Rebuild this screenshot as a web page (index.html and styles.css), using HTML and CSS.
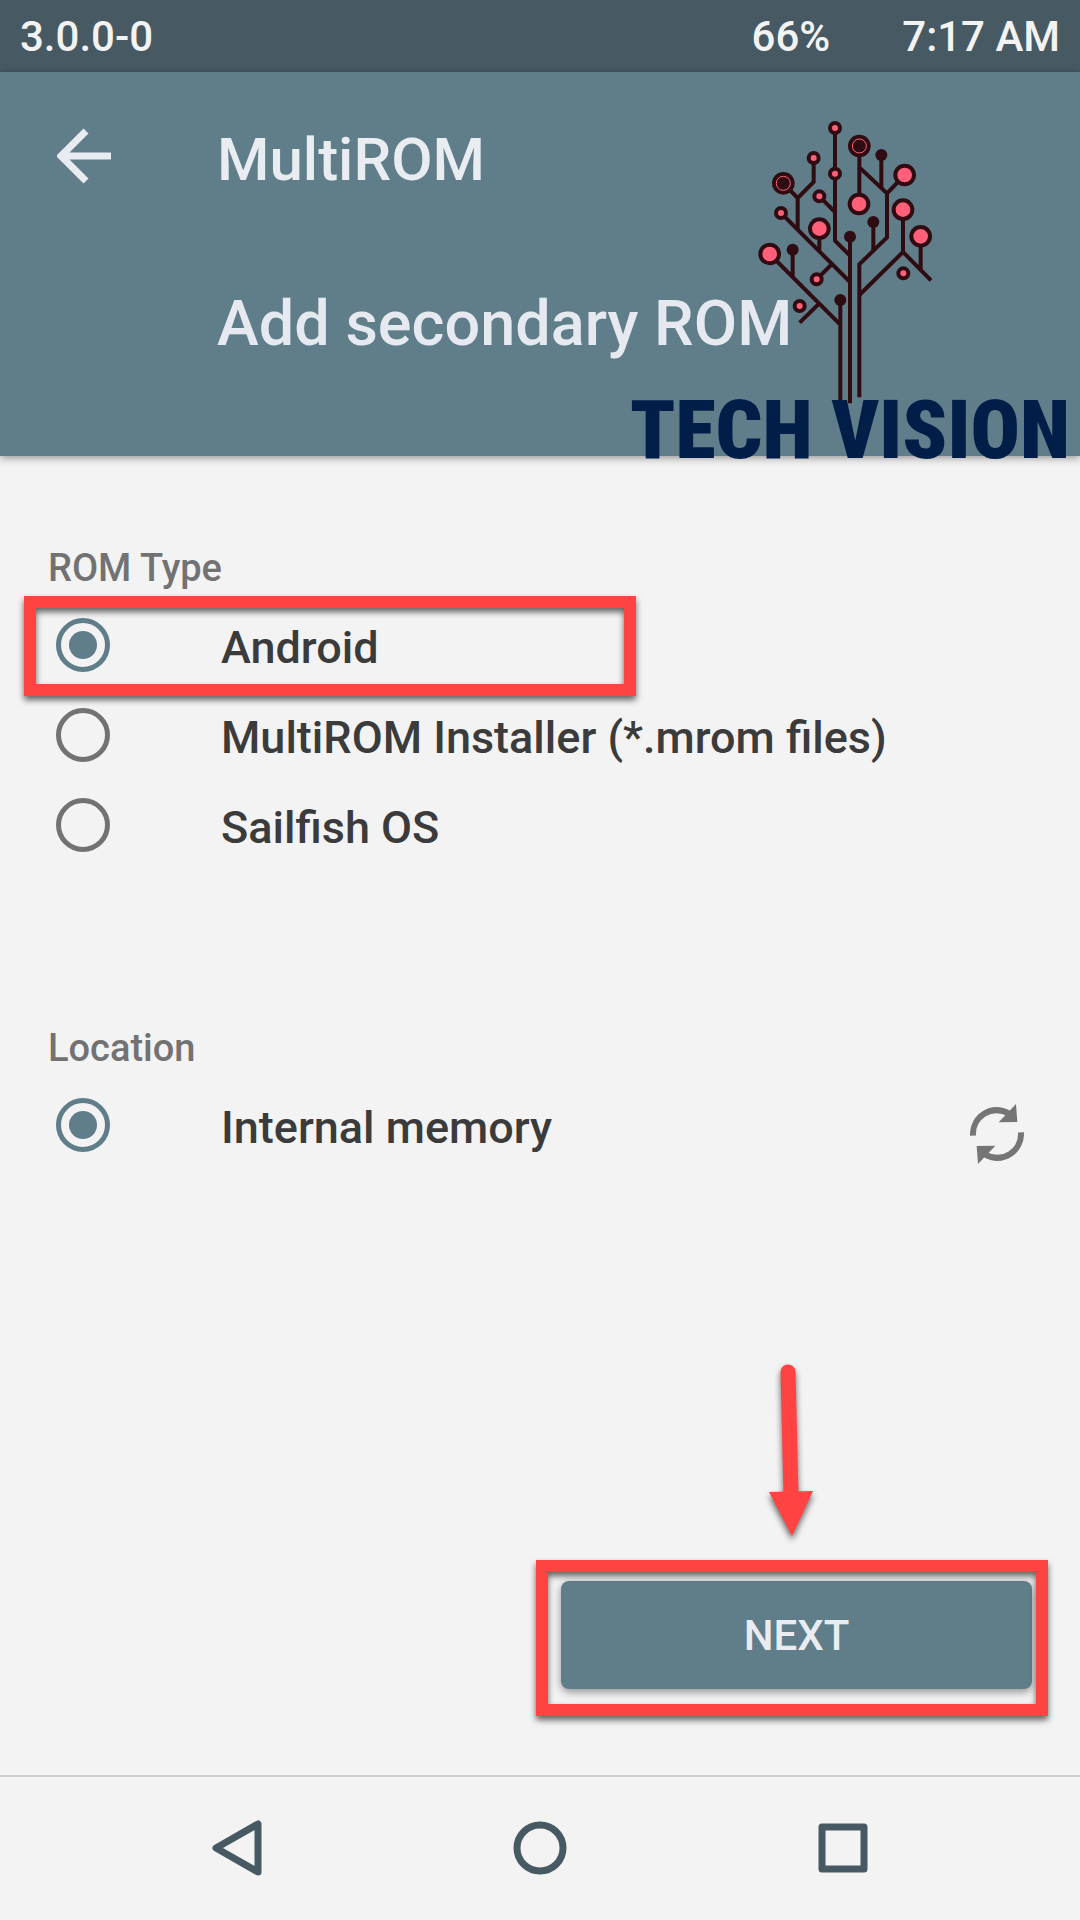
FILE: index.html
```html
<!DOCTYPE html>
<html lang="en">
<head>
  <meta charset="UTF-8">
  <meta name="viewport" content="width=device-width, initial-scale=1">
  <title>MultiROM - Add secondary ROM</title>
  <link rel="stylesheet" href="styles.css">
</head>
<body>
  <div class="status-bar">
    <span>3.0.0-0</span>
    <span class="battery">66%</span>
    <span>7:17 AM</span>
  </div>

  <header class="header">
    <button class="back" type="button" aria-label="Back">
      <svg width="54" height="56" viewBox="0 0 54 56">
        <path d="M54 28H5M29 3L4 28L29 53" fill="none" stroke="#e9edf1" stroke-width="7"/>
      </svg>
    </button>
    <div class="titles">
      <h1>MultiROM</h1>
      <h2>Add secondary ROM</h2>
    </div>

    <div class="logo">
      <svg class="tree" width="210" height="300" viewBox="0 0 630 900">
        <g fill="none" stroke="#2f0c11" stroke-width="12">
          <path d="M285 54V392L330 437M238 259L285 306"/>
          <path d="M221 144V216L173 264V357M130 220L173 264"/>
          <path d="M123 309L330 516M238 356V424M230 508L276 462"/>
          <path d="M330 380V880M301 570V880"/>
          <path d="M89 432L301 644M158 419V500M179 638L238 580"/>
          <path d="M358 108V282M358 172L441 250V382L358 463V862"/>
          <path d="M494 195L441 250M424 135V232M400 336V422"/>
          <path d="M489 299V426L358 555M489 426L573 511M542 379V480"/>
        </g>
        <g fill="#ff5f78" stroke="#2f0c11" stroke-width="12">
          <circle cx="285" cy="54" r="15"/>
          <circle cx="221" cy="144" r="15"/>
          <circle cx="285" cy="191" r="15"/>
          <circle cx="238" cy="259" r="15"/>
          <circle cx="123" cy="309" r="15"/>
          <circle cx="230" cy="508" r="15"/>
          <circle cx="179" cy="588" r="15"/>
          <circle cx="490" cy="490" r="15"/>
          <circle cx="494" cy="195" r="28"/>
          <circle cx="357" cy="282" r="28"/>
          <circle cx="489" cy="299" r="28"/>
          <circle cx="542" cy="379" r="28"/>
          <circle cx="238" cy="356" r="28"/>
          <circle cx="89" cy="432" r="28"/>
        </g>
        <g fill="#2f0c11">
          <circle cx="424" cy="135" r="18"/>
          <circle cx="400" cy="336" r="18"/>
          <circle cx="330" cy="380" r="18"/>
          <circle cx="158" cy="419" r="18"/>
          <circle cx="301" cy="570" r="18"/>
          <circle cx="358" cy="108" r="34"/>
          <circle cx="130" cy="220" r="34"/>
        </g>
        <g fill="none" stroke="#ff5f78" stroke-width="3">
          <circle cx="358" cy="108" r="21"/>
          <circle cx="130" cy="220" r="21"/>
        </g>
      </svg>
      <span class="brand">TECH VISION</span>
    </div>
  </header>

  <main class="content">
    <fieldset class="group">
      <legend>ROM Type</legend>
      <div class="row">
        <input type="radio" name="type" id="android" checked>
        <label for="android">Android</label>
        <div class="mark mark-row"></div>
      </div>
      <div class="row">
        <input type="radio" name="type" id="installer">
        <label for="installer">MultiROM Installer (*.mrom files)</label>
      </div>
      <div class="row">
        <input type="radio" name="type" id="sailfish">
        <label for="sailfish">Sailfish OS</label>
      </div>
    </fieldset>

    <fieldset class="group">
      <legend>Location</legend>
      <div class="row">
        <input type="radio" name="location" id="internal" checked>
        <label for="internal">Internal memory</label>
        <button class="refresh" type="button" aria-label="Refresh">
          <svg width="54" height="60" viewBox="0 0 162 180">
            <g fill="none" stroke="#757575" stroke-width="18">
              <path d="M9 95C6 40 62 -1 118 29"/>
              <path d="M153 85C156 140 100 181 44 151"/>
            </g>
            <path d="M138 0L142 54L86 55ZM24 180L20 126L76 125Z" fill="#757575"/>
          </svg>
        </button>
      </div>
    </fieldset>

    <div class="actions">
      <div class="next-wrap">
        <button class="next" type="button">NEXT</button>
        <div class="mark mark-next"></div>
        <svg class="arrow" width="44" height="172" viewBox="0 0 44 172">
          <path d="M19 8L22 130" stroke="#ff4343" stroke-width="15" stroke-linecap="round"/>
          <path d="M0 128L44 127L23 172Z" fill="#ff4343"/>
        </svg>
      </div>
    </div>
  </main>

  <nav class="nav-bar">
    <button type="button" aria-label="Back">
      <svg width="56" height="56" viewBox="0 0 56 56">
        <path d="M49 4V52L7 28Z"/>
      </svg>
    </button>
    <button type="button" aria-label="Home">
      <svg width="56" height="56" viewBox="0 0 56 56">
        <circle cx="28" cy="28" r="23"/>
      </svg>
    </button>
    <button type="button" aria-label="Recent apps">
      <svg width="56" height="56" viewBox="0 0 56 56">
        <rect x="7" y="7" width="42" height="42"/>
      </svg>
    </button>
  </nav>
</body>
</html>
```
FILE: styles.css
```css
* {
  box-sizing: border-box;
}
body {
  margin: 0;
  min-height: 100vh;
  display: flex;
  flex-direction: column;
  font-family: Roboto, "Liberation Sans", sans-serif;
  font-weight: 500;
  background-color: #f3f3f3;
  color: #3b3b3b;
}
button {
  padding: 0;
  border: 0;
  background: none;
  font: inherit;
  line-height: 0;
}

/* status bar */
.status-bar {
  display: flex;
  gap: 72px;
  height: 72px;
  padding: 0 20px;
  line-height: 74px;
  font-size: 42px;
  background-color: #475a64;
  color: #f3f3f3;
}
.battery {
  margin-left: auto;
}

/* header */
.header {
  position: relative;
  display: flex;
  gap: 106px;
  height: 384px;
  padding: 48px 57px;
  background-color: #607d8a;
  color: #e9edf1;
  box-shadow: 0 2px 8px rgba(0, 0, 0, 0.4);
}
.back {
  align-self: flex-start;
  margin-top: 8px;
}
h1, h2 {
  margin: 0;
  font-weight: 500;
  line-height: 80px;
}
h1 {
  font-size: 60px;
}
h2 {
  margin-top: 84px;
  font-size: 63px;
  color: #e6eaf0;
}
.logo {
  position: absolute;
  top: 38px;
  right: 16px;
  width: 434px;
}
.tree {
  display: block;
  margin-left: 110px;
}
.brand {
  position: absolute;
  top: 270px;
  left: 0;
  line-height: 100px;
  font-family: "Roboto Condensed", Roboto, sans-serif;
  font-size: 82px;
  font-weight: 900;
  white-space: nowrap;
  color: #001e48;
}

/* options */
.content {
  flex: 1;
  display: flex;
  flex-direction: column;
  padding-top: 88px;
}
.group {
  margin: 0 0 154px;
  padding: 0;
  border: 0;
}
legend {
  padding: 0 48px;
  margin-bottom: 8px;
  line-height: 48px;
  font-size: 38px;
  color: #727272;
}
.row {
  position: relative;
  display: flex;
  align-items: center;
  height: 90px;
  padding: 0 56px;
  font-size: 45px;
}
.row label {
  padding-left: 111px;
  padding-top: 4px;
}
input[type="radio"] {
  appearance: none;
  width: 54px;
  height: 54px;
  margin: 0;
  border: 5px solid #727272;
  border-radius: 50%;
}
input[type="radio"]:checked {
  padding: 8px;
  border-color: #607d8a;
  background: #607d8a content-box;
}
.refresh {
  margin-left: auto;
  padding-top: 18px;
}

/* next button */
.actions {
  display: flex;
  justify-content: flex-end;
  margin-top: auto;
  padding: 0 48px 86px;
}
.next-wrap {
  position: relative;
}
.next {
  width: 471px;
  height: 108px;
  padding-top: 2px;
  border-radius: 8px;
  font-size: 42px;
  color: #e9edf1;
  background-color: #607d8a;
  box-shadow: 0 3px 8px rgba(0, 0, 0, 0.4);
}

/* red highlights */
.mark {
  position: absolute;
  border: 12px solid #ff4343;
  filter: drop-shadow(0 4px 3px rgba(0, 0, 0, 0.6));
  pointer-events: none;
}
.mark-row {
  top: -4px;
  left: 24px;
  width: 612px;
  height: 100px;
}
.mark-next {
  top: -21px;
  left: -25px;
  right: -16px;
  height: 156px;
}
.arrow {
  position: absolute;
  top: -217px;
  left: 208px;
  overflow: visible;
  filter: drop-shadow(0 4px 3px rgba(0, 0, 0, 0.6));
}

/* navigation bar */
.nav-bar {
  display: flex;
  justify-content: center;
  align-items: center;
  gap: 247px;
  height: 145px;
  padding-bottom: 2px;
  border-top: 2px solid #cfd1cf;
}
.nav-bar svg {
  fill: none;
  stroke: #475a64;
  stroke-width: 7;
  stroke-linejoin: round;
}
```
